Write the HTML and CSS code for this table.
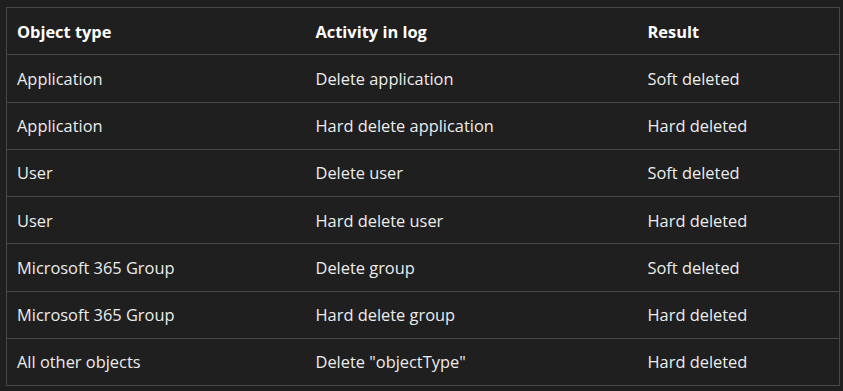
FILE: index.html
```html
<!DOCTYPE html>
<html lang="en">
<head>
    <meta charset="UTF-8">
    <meta name="viewport" content="width=device-width, initial-scale=1.0">
    <title>Deleted objects</title>
    <link rel="stylesheet" href="styles.css">
</head>
<body>
    <table class="log-table">
        <thead>
            <tr>
                <th class="col-type">Object type</th>
                <th class="col-activity">Activity in log</th>
                <th class="col-result">Result</th>
            </tr>
        </thead>
        <tbody>
            <tr>
                <td>Application</td>
                <td>Delete application</td>
                <td>Soft deleted</td>
            </tr>
            <tr>
                <td>Application</td>
                <td>Hard delete application</td>
                <td>Hard deleted</td>
            </tr>
            <tr>
                <td>User</td>
                <td>Delete user</td>
                <td>Soft deleted</td>
            </tr>
            <tr>
                <td>User</td>
                <td>Hard delete user</td>
                <td>Hard deleted</td>
            </tr>
            <tr>
                <td>Microsoft 365 Group</td>
                <td>Delete group</td>
                <td>Soft deleted</td>
            </tr>
            <tr>
                <td>Microsoft 365 Group</td>
                <td>Hard delete group</td>
                <td>Hard deleted</td>
            </tr>
            <tr>
                <td>All other objects</td>
                <td>Delete "objectType"</td>
                <td>Hard deleted</td>
            </tr>
        </tbody>
    </table>
</body>
</html>
```
FILE: styles.css
```css
* {
    margin: 0;
    padding: 0;
    box-sizing: border-box;
}

body {
    font-family: "Open Sans", "Noto Sans", sans-serif;
    background: #1f1f1f;
    color: #ececec;
    padding: 7px 4px 0 6px;
}

.log-table {
    width: 833px;
    border-collapse: collapse;
    table-layout: fixed;
    border: 1px solid #474747;
    font-size: 16.4px;
}

.col-type {
    width: 299px;
}

.col-activity {
    width: 332px;
}

.col-result {
    width: 202px;
}

.log-table th,
.log-table td {
    height: 47.25px;
    padding: 0 10px;
    text-align: left;
    vertical-align: middle;
    border-bottom: 1px solid #474747;
    white-space: nowrap;
}

.log-table th {
    font-weight: 700;
    color: #ffffff;
}
```
